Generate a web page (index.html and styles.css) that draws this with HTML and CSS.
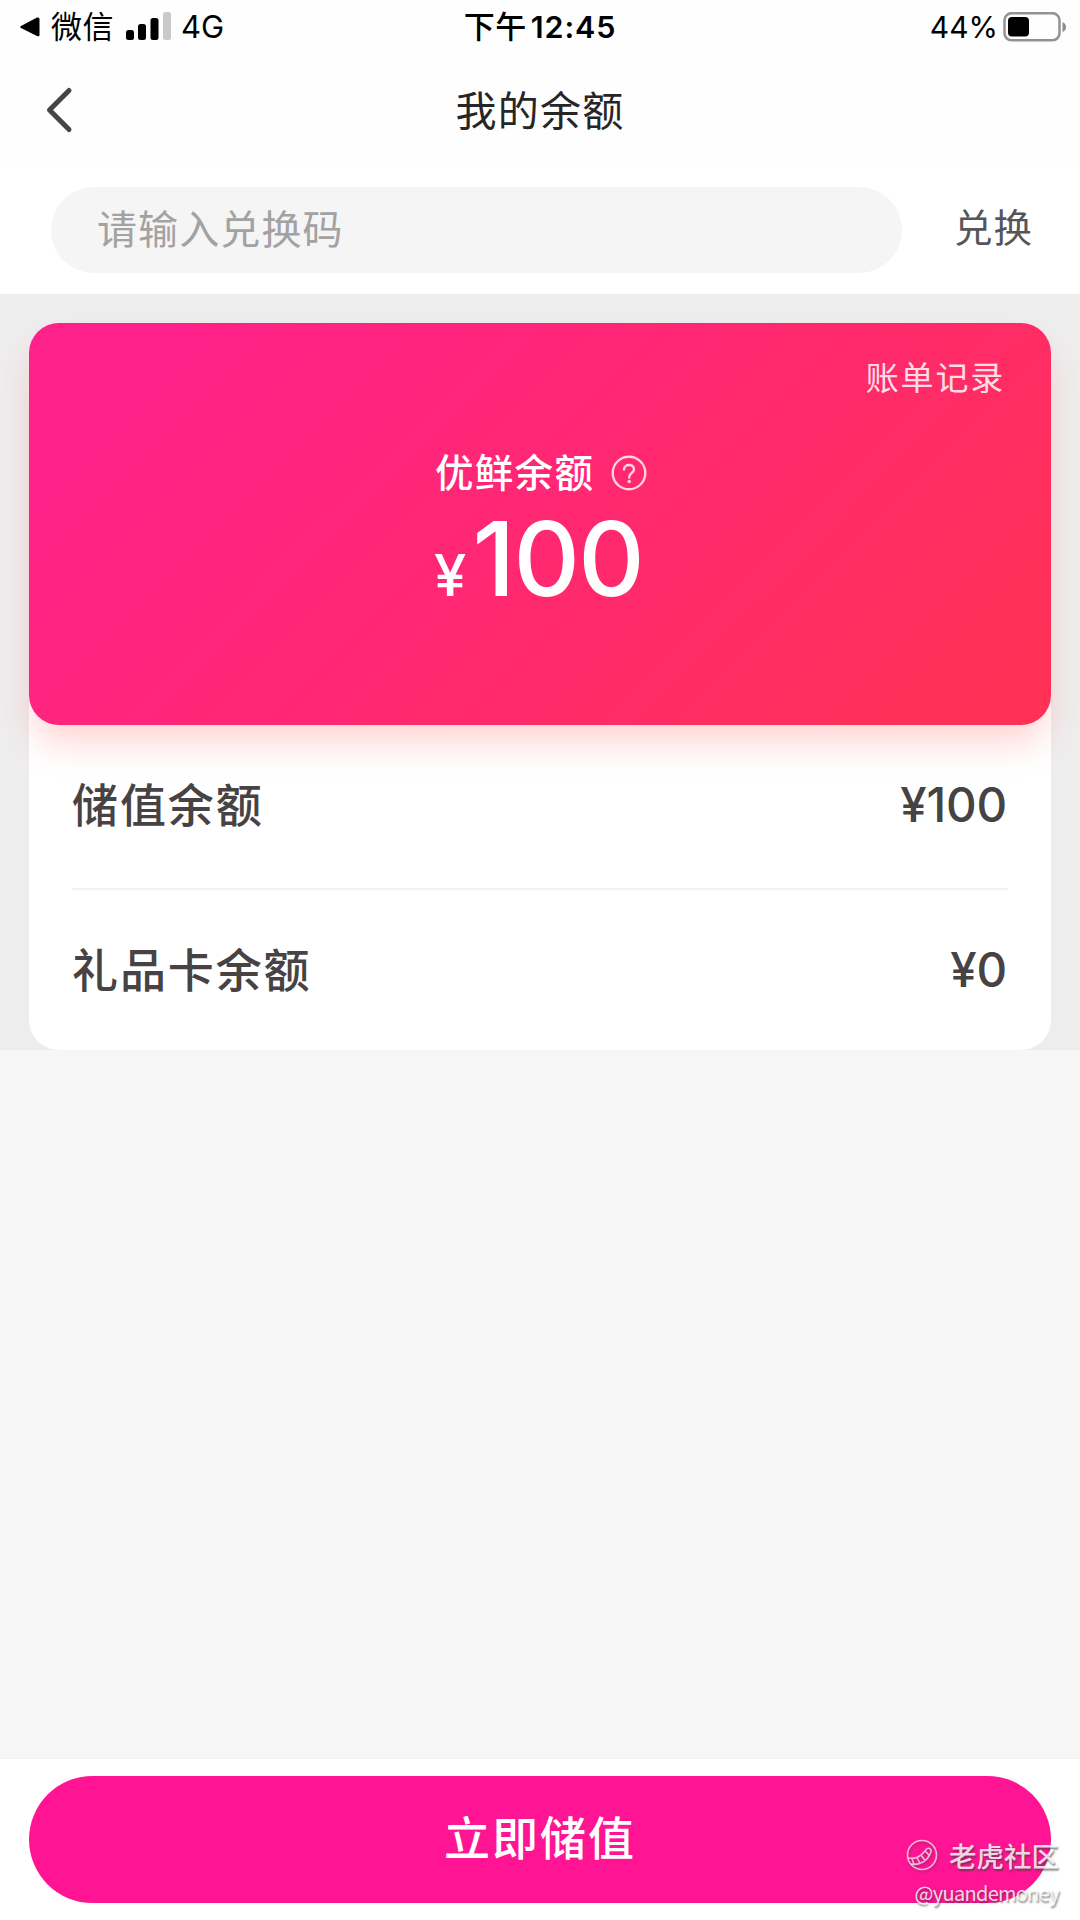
FILE: index.html
```html
<!DOCTYPE html>
<html lang="zh-CN">
<head>
<meta charset="utf-8">
<title>我的余额</title>
<link rel="stylesheet" href="styles.css">
</head>
<body>
<div class="app">
  <header class="status">
    <div class="status-left">
      <svg class="back-app" width="20" height="20" viewBox="0 0 20 20"><path d="M1 9 17 .6Q19.500 0 19.500 2V18Q19.500 20 17 19L1 11Q-.5 10 1 9Z"/></svg>
      <span class="wechat">微信</span>
      <svg class="signal" width="46" height="28" viewBox="0 0 46 28"><rect y="18" width="8" height="10" rx="2.500"/><rect x="12" y="12" width="8" height="16" rx="2.500"/><rect x="24.500" y="6" width="8" height="22" rx="2.500"/><rect class="off" x="37" width="8" height="28" rx="2.500"/></svg>
      <span class="latin network">4G</span>
    </div>
    <div class="clock"><span class="period">下午</span><span class="latin time">12:45</span></div>
    <div class="status-right">
      <span class="latin percent">44%</span>
      <svg width="64" height="30" viewBox="0 0 64 30"><rect class="battery-shell" x="1.500" y="1.300" width="55" height="27" rx="7"/><rect x="5" y="5" width="21" height="19.500" rx="4"/><path class="battery-cap" d="M59.500 10Q63 11.500 63 15T59.500 20Z"/></svg>
    </div>
  </header>
  <nav class="nav">
    <svg class="back" width="28" height="48" viewBox="0 0 28 48"><path d="M24 4.500 4.500 24 24 43.500"/></svg>
    <h1>我的余额</h1>
  </nav>
  <section class="redeem">
    <div class="code">请输入兑换码</div>
    <div class="redeem-action">兑换</div>
  </section>
  <main class="content">
    <section class="card">
      <div class="bill">账单记录</div>
      <div class="balance">
        <div class="label"><span>优鲜余额</span><svg width="36" height="36" viewBox="0 0 36 36"><circle cx="18" cy="18" r="16.300"/><path d="M13 14.500C13 8.500 23 8.500 23 14.300C23 18 18.200 18 18.200 22.500"/><circle class="dot" cx="18.200" cy="26.500" r="1.700"/></svg></div>
        <div class="amount latin"><span class="yen">¥</span><span class="number">100</span></div>
      </div>
    </section>
    <section class="details">
      <div class="row"><span>储值余额</span><span class="latin value">¥100</span></div>
      <div class="row"><span>礼品卡余额</span><span class="latin value">¥0</span></div>
    </section>
  </main>
  <footer class="footer">
    <div class="topup">立即储值</div>
    <div class="watermark">
      <div class="community"><svg width="32" height="32" viewBox="0 0 32 32"><circle cx="16" cy="16" r="14.500"/><path d="M2 19Q8 20 12 18T19 12Q21 8.500 23.500 9.500T24.500 14C22 21 14 27 5 25M6 19.500l2 6M11 18.500l3 6M15 16l4 5.500M19 12l4.500 4.500"/></svg><span>老虎社区</span></div>
      <div class="handle">@yuandemoney</div>
    </div>
  </footer>
</div>
</body>
</html>
```
FILE: styles.css
```css
* { box-sizing: border-box; }
body { margin: 0; font-family: "Noto Sans CJK SC", sans-serif; }
svg { display: block; flex: none; }
.latin { font-family: Inter, "Noto Sans CJK SC", sans-serif; }
.app { width: 1080px; height: 1920px; display: flex; flex-direction: column; background: #f6f6f6; overflow: hidden; }
.status { height: 54px; display: grid; grid-template-columns: 1fr auto 1fr; align-items: center; background: #fefefe; font-size: 30px; line-height: 54px; color: #000; white-space: nowrap; }
.status-left { display: flex; align-items: center; padding-left: 20px; }
.wechat { margin-left: 11px; font-size: 31px; line-height: 50px; padding-bottom: 4px; letter-spacing: .5px; }
.signal { margin-left: 12px; margin-top: -2px; }
.signal .off { fill: #c9c9c9; }
.network { margin-left: 9px; font-size: 31px; }
.clock { display: flex; font-weight: 500; letter-spacing: 1px; }
.period { line-height: 50px; font-size: 31px; letter-spacing: .5px; }
.time { margin-left: 4px; font-weight: 600; font-size: 30.500px; letter-spacing: .9px; }
.status-right { display: flex; align-items: center; justify-content: flex-end; padding-right: 13px; }
.percent { font-size: 30px; margin-right: 5px; }
.battery-shell { fill: none; stroke: #929292; stroke-width: 2.500px; }
.battery-cap { fill: #8d8d8d; }
.nav { height: 113px; display: grid; grid-template-columns: 1fr auto 1fr; align-items: center; background: #fefefe; padding-bottom: 1px; }
.back { margin-left: 44.500px; fill: none; stroke: #454545; stroke-width: 5px; stroke-linecap: round; stroke-linejoin: round; }
.nav h1 { margin: 0; padding-bottom: 4px; font-size: 41px; font-weight: 400; letter-spacing: 1.200px; color: #262626; line-height: 56px; }
.redeem { height: 127px; display: flex; padding: 20px 47px 0 51px; background: #fff; }
.code { width: 851px; height: 86px; border-radius: 43px; background: #f5f5f5; padding-left: 46px; line-height: 81px; font-size: 40px; letter-spacing: 1.100px; color: #a2a2a2; }
.redeem-action { margin-left: auto; font-size: 38.500px; letter-spacing: 1px; line-height: 77px; color: #55565a; }
.content { height: 756px; padding: 29px 29px 0; background: #eeedee; }
.card { position: relative; height: 402px; border-radius: 30px; background: linear-gradient(135deg, #ff218a 10%, #ff2872 50%, #ff3156 94%); box-shadow: 0 22px 36px -6px rgba(255, 75, 65, .25); color: #fff; padding: 29px 46px 0 0; }
.bill { text-align: right; font-size: 33px; line-height: 48px; letter-spacing: 1.800px; color: #ffdde6; }
.balance { width: 208px; margin: 41px 0 0 406px; }
.label { display: flex; align-items: center; justify-content: space-between; font-size: 38.500px; font-weight: 500; line-height: 58px; letter-spacing: 1.300px; white-space: nowrap; }
.label svg { margin: 5px -4px 0 0; fill: none; stroke: #ffd3df; stroke-width: 2.400px; stroke-linecap: round; }
.label .dot { fill: #ffd3df; stroke: none; }
.amount { display: flex; align-items: baseline; font-weight: 500; line-height: 119px; white-space: nowrap; }
.yen { font-size: 58px; line-height: 60px; width: 41px; margin-left: -1px; }
.number { font-size: 103px; letter-spacing: -1.700px; }
.details { height: 355px; margin-top: -30px; padding: 30px 43px 0; background: #fff; border-radius: 0 0 30px 30px; }
.row { height: 161px; display: flex; justify-content: space-between; align-items: center; font-size: 46px; font-weight: 500; letter-spacing: 1.900px; color: #474243; line-height: 60px; }
.row:first-child { height: 165px; padding-bottom: 3px; border-bottom: 2px solid #f1f1f1; }
.row > span:first-child { padding-bottom: 7px; }
.value { font-size: 47.500px; letter-spacing: -.2px; padding-right: 1px; }
.row:last-child .value { padding-bottom: 2px; }
.footer { position: relative; margin-top: auto; height: 162px; padding: 17px 29px 0; border-top: 1px solid #f2f2f2; background: #fff; }
.topup { height: 127px; border-radius: 64px; background: #ff1493; text-align: center; font-size: 46px; font-weight: 500; letter-spacing: 2px; line-height: 118px; color: #fff; }
.watermark { position: absolute; right: 21px; bottom: 9px; display: flex; flex-direction: column; align-items: flex-end; color: rgba(255, 255, 255, .83); text-shadow: 1px 2px 2px rgba(60, 60, 60, .65); }
.community { display: flex; align-items: center; gap: 11px; font-size: 27.500px; font-weight: 500; line-height: 40px; }
.community svg { fill: none; stroke: rgba(255, 225, 242, .8); stroke-width: 1.600px; filter: drop-shadow(1px 2px 1px rgba(60, 60, 60, .5)); }
.handle { font-size: 20px; letter-spacing: -.7px; line-height: 36px; }
```
